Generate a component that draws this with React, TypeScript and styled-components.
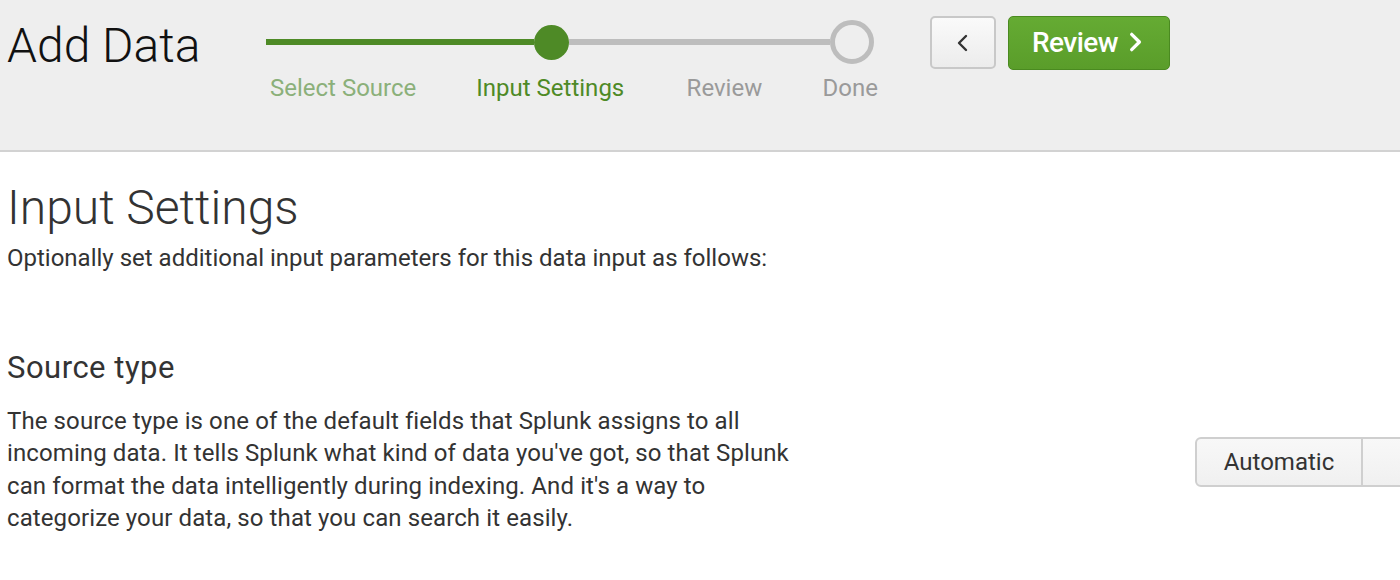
import { FC } from 'react';
import styled, { createGlobalStyle } from 'styled-components';

const GlobalStyle = createGlobalStyle`
  html, body {
    margin: 0;
    padding: 0;
    background: #fff;
    overflow: hidden;
  }
  body {
    font-family: Roboto, "Liberation Sans", sans-serif;
    color: #333;
  }
`;

const Header = styled.header`
  height: 150px;
  background: #eeeeee;
  border-bottom: 2px solid #d2d2d2;
  display: flex;
  align-items: flex-start;
`;

const PageTitle = styled.h1`
  margin: 14px 0 0 7px;
  width: 259px;
  font-size: 48px;
  font-weight: 300;
  color: #111;
  line-height: 64px;
`;

const Stepper = styled.div`
  margin-top: 20px;
  width: 616px;
  display: flex;
  flex-direction: column;
`;

const Track = styled.div`
  display: flex;
  align-items: center;
  height: 44px;
`;

const Segment = styled.div<{ done?: boolean; width: number }>`
  height: 6px;
  width: ${(p) => p.width}px;
  background: ${(p) => (p.done ? '#4e8a26' : '#bdbdbd')};
`;

const Dot = styled.div`
  width: 35px;
  height: 35px;
  border-radius: 50%;
  background: #4e8a26;
  flex-shrink: 0;
`;

const Ring = styled.div`
  width: 34px;
  height: 34px;
  border-radius: 50%;
  border: 5px solid #bdbdbd;
  background: #eeeeee;
  flex-shrink: 0;
`;

const Labels = styled.div`
  display: flex;
  margin-top: 9px;
  font-size: 24px;
  line-height: 30px;
`;

const StepLabel = styled.span<{ tone: 'past' | 'current' | 'future'; width: number; indent?: number }>`
  width: ${(p) => p.width}px;
  padding-left: ${(p) => p.indent ?? 0}px;
  box-sizing: border-box;
  color: ${(p) =>
    p.tone === 'past' ? '#8bb07a' : p.tone === 'current' ? '#4e8a26' : '#9a9a9a'};
`;

const Actions = styled.div`
  margin: 16px 0 0 48px;
  display: flex;
  gap: 12px;
`;

const BackButton = styled.button`
  width: 66px;
  height: 53px;
  border: 2px solid #c8c8c8;
  border-radius: 5px;
  background: linear-gradient(#fafafa, #ececec);
  display: flex;
  align-items: center;
  justify-content: center;
  padding: 0;
  color: #333;
`;

const PrimaryButton = styled.button`
  width: 162px;
  height: 54px;
  border: 1px solid #4a8a20;
  border-radius: 5px;
  background: linear-gradient(#65ab33, #5a9d2a);
  color: #fff;
  font-family: Roboto, "Liberation Sans", sans-serif;
  font-size: 28px;
  font-weight: 500;
  letter-spacing: -0.5px;
  display: flex;
  align-items: center;
  justify-content: center;
  gap: 6px;
  padding: 0 0 2px;
`;

const Body = styled.main`
  padding: 0 7px;
`;

const SectionTitle = styled.h2`
  margin: 28px 0 0;
  font-size: 48px;
  font-weight: 300;
  line-height: 56px;
  color: #333;
`;

const Lead = styled.p`
  margin: 7px 0 0;
  font-size: 24px;
  line-height: 30px;
  color: #333;
`;

const SubTitle = styled.h3`
  margin: 77px 0 0;
  font-size: 31px;
  font-weight: 400;
  letter-spacing: 0.5px;
  line-height: 36px;
  color: #333;
`;

const Row = styled.div`
  display: grid;
  grid-template-columns: 1188px auto;
  margin-top: 19px;
`;

const Description = styled.p`
  margin: 0;
  width: 800px;
  font-size: 24px;
  letter-spacing: 0.1px;
  line-height: 32.3px;
  color: #333;
`;

const Segmented = styled.div`
  display: flex;
  margin-top: 32px;
  height: 50px;
`;

const SegmentButton = styled.button<{ first?: boolean }>`
  width: 168px;
  height: 50px;
  border: 2px solid #cfcfcf;
  border-left-width: ${(p) => (p.first ? 2 : 0)}px;
  border-radius: ${(p) => (p.first ? '6px 0 0 6px' : '0')};
  background: linear-gradient(#f8f8f8, #f0f0f0);
  font-family: Roboto, "Liberation Sans", sans-serif;
  font-size: 24px;
  color: #333;
  padding: 0;
`;

const Chevron: FC<{ dir: 'left' | 'right'; size: number; stroke: number }> = ({ dir, size, stroke }) => (
  <svg width={size} height={size} viewBox="0 0 20 20" fill="none">
    <path
      d={dir === 'left' ? 'M13 3 L6 10 L13 17' : 'M7 3 L14 10 L7 17'}
      stroke="currentColor"
      strokeWidth={stroke}
      strokeLinecap="round"
      strokeLinejoin="round"
    />
  </svg>
);

const App: FC = () => {
  return (
    <>
      <GlobalStyle />
      <Header>
        <PageTitle>Add Data</PageTitle>
        <Stepper>
          <Track>
            <Segment done width={268} />
            <Dot />
            <Segment width={261} />
            <Ring />
          </Track>
          <Labels>
            <StepLabel tone="past" width={212} indent={4}>
              Select Source
            </StepLabel>
            <StepLabel tone="current" width={212}>Input Settings</StepLabel>
            <StepLabel tone="future" width={137}>Review</StepLabel>
            <StepLabel tone="future" width={60}>Done</StepLabel>
          </Labels>
        </Stepper>
        <Actions>
          <BackButton aria-label="Back">
            <Chevron dir="left" size={20} stroke={2.4} />
          </BackButton>
          <PrimaryButton>
            Review
            <Chevron dir="right" size={22} stroke={3} />
          </PrimaryButton>
        </Actions>
      </Header>
      <Body>
        <SectionTitle>Input Settings</SectionTitle>
        <Lead>Optionally set additional input parameters for this data input as follows:</Lead>
        <SubTitle>Source type</SubTitle>
        <Row>
          <Description>
            The source type is one of the default fields that Splunk assigns to all incoming data. It
            tells Splunk what kind of data you've got, so that Splunk can format the data
            intelligently during indexing. And it's a way to categorize your data, so that you can
            search it easily.
          </Description>
          <Segmented>
            <SegmentButton first>Automatic</SegmentButton>
            <SegmentButton aria-label="Select" />
          </Segmented>
        </Row>
      </Body>
    </>
  );
};

export default App;
